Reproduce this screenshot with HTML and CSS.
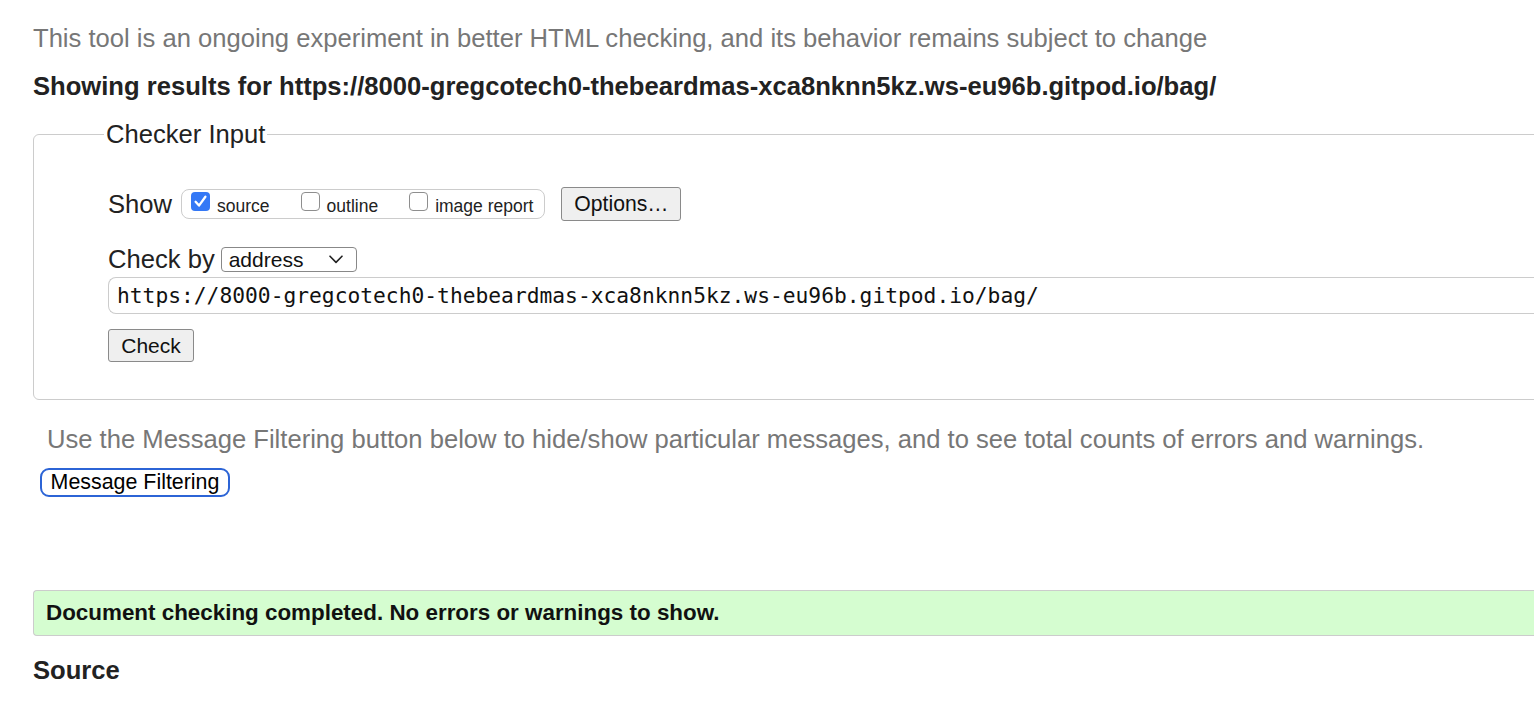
FILE: index.html
```html
<!DOCTYPE html>
<html lang="en">
<head>
<meta charset="utf-8">
<title>Nu Html Checker</title>
<link rel="stylesheet" href="styles.css">
</head>
<body>
<div class="page">
  <p class="intro">This tool is an ongoing experiment in better HTML checking, and its behavior remains subject to change</p>
  <p class="results-for">Showing results for https://8000-gregcotech0-thebeardmas-xca8nknn5kz.ws-eu96b.gitpod.io/bag/</p>
  <fieldset class="checker">
    <legend class="legend">Checker Input</legend>
    <div class="show-row">
      <span class="row-label">Show</span>
      <span class="show-group">
        <span class="opt">
          <span class="cb cb-on"><svg viewBox="0 0 19 19" width="19" height="19"><path d="M4.6 9.8 L8 13.6 L14.4 4.8" fill="none" stroke="#fff" stroke-width="2.3" stroke-linecap="round" stroke-linejoin="round"/></svg></span>
          <span class="opt-text">source</span>
        </span>
        <span class="opt">
          <span class="cb"></span>
          <span class="opt-text">outline</span>
        </span>
        <span class="opt">
          <span class="cb"></span>
          <span class="opt-text">image report</span>
        </span>
      </span>
      <button class="btn btn-options" type="button">Options…</button>
    </div>
    <div class="checkby-row">
      <span class="row-label">Check by</span>
      <span class="select">
        <span class="select-text">address</span>
        <svg class="chev" viewBox="0 0 14 9" width="14" height="9"><path d="M1 1.2 L7 7.4 L13 1.2" fill="none" stroke="#222" stroke-width="1.6" stroke-linecap="round" stroke-linejoin="round"/></svg>
      </span>
    </div>
    <div class="url-input">https://8000-gregcotech0-thebeardmas-xca8nknn5kz.ws-eu96b.gitpod.io/bag/</div>
    <div class="check-row"><button class="btn btn-check" type="button">Check</button></div>
  </fieldset>
  <p class="filter-note">Use the Message Filtering button below to hide/show particular messages, and to see total counts of errors and warnings.</p>
  <button class="btn-filter" type="button">Message Filtering</button>
  <div class="success">Document checking completed. No errors or warnings to show.</div>
  <h2 class="source-h">Source</h2>
</div>
</body>
</html>
```

FILE: styles.css
```css
html, body {
  margin: 0;
  padding: 0;
  overflow: hidden;
  background: #fff;
}
body {
  font-family: "Liberation Sans", Arial, sans-serif;
  color: #222;
}
.page {
  padding-left: 33px;
  margin-right: -200px;
}
.intro {
  margin: 24px 0 0;
  font-size: 25.6px;
  line-height: 28px;
  color: #777;
  white-space: nowrap;
}
.results-for {
  margin: 20px 0 0;
  font-size: 25.6px;
  line-height: 28px;
  font-weight: bold;
  color: #222;
  white-space: nowrap;
}
.checker {
  margin: 20px 0 0;
  padding: 0 0 37px 74px;
  border: 1px solid #ccc;
  border-radius: 6px;
  min-width: 0;
}
.legend {
  margin-left: -4px;
  padding: 0 2px;
  font-size: 25.6px;
  line-height: 28px;
  color: #222;
}
.show-row {
  display: flex;
  align-items: center;
  height: 34px;
  margin-top: 39px;
}
.row-label {
  font-size: 25.6px;
  line-height: 28px;
  color: #222;
}
.show-group {
  display: flex;
  align-items: center;
  height: 28px;
  margin-left: 9px;
  padding: 0 11px 0 9px;
  border: 1px solid #ccc;
  border-radius: 8px;
}
.opt {
  display: flex;
  align-items: center;
}
.opt + .opt {
  margin-left: 31px;
}
.cb {
  display: inline-block;
  width: 17px;
  height: 17px;
  border: 1px solid #8e8e8e;
  border-radius: 4px;
  background: #fff;
  box-sizing: content-box;
  position: relative;
  top: -3px;
}
.cb-on {
  width: 19px;
  height: 19px;
  border: none;
  background: #3478f6;
  top: -3px;
}
.cb-on svg {
  display: block;
}
.opt-text {
  margin-left: 7px;
  font-size: 17.5px;
  line-height: 20px;
  color: #222;
  position: relative;
  top: 2px;
}
.btn {
  font-family: "Liberation Sans", Arial, sans-serif;
  color: #111;
  background: #efefef;
  border: 1px solid #8a8a8a;
  border-radius: 3px;
  padding: 0;
}
.btn-options {
  margin-left: 16px;
  width: 120px;
  height: 34px;
  font-size: 21.2px;
}
.checkby-row {
  display: flex;
  align-items: center;
  height: 28px;
  margin-top: 24px;
}
.select {
  display: flex;
  align-items: center;
  justify-content: space-between;
  margin-left: 6px;
  width: 114px;
  height: 23px;
  padding: 0 13px 0 7px;
  border: 1px solid #888;
  border-radius: 4px;
}
.select-text {
  font-size: 21px;
  line-height: 23px;
  color: #111;
}
.chev {
  display: block;
}
.url-input {
  margin-top: 4px;
  height: 35px;
  line-height: 35px;
  padding-left: 8px;
  border: 1px solid #ccc;
  border-right: none;
  border-radius: 8px 0 0 8px;
  font-family: "DejaVu Sans Mono", "Liberation Mono", monospace;
  font-size: 21.27px;
  color: #111;
  white-space: nowrap;
}
.check-row {
  margin-top: 15px;
  display: flex;
}
.btn-check {
  width: 86px;
  height: 33px;
  font-size: 21px;
}
.filter-note {
  margin: 25px 0 0 14px;
  font-size: 25.6px;
  line-height: 28px;
  color: #777;
  white-space: nowrap;
}
.btn-filter {
  display: block;
  margin: 15px 0 0 7px;
  height: 29px;
  width: 190px;
  padding: 0;
  font-family: "Liberation Sans", Arial, sans-serif;
  font-size: 21.4px;
  color: #000;
  background: #fff;
  border: 2px solid #2c64d6;
  border-radius: 9px;
}
.success {
  margin-top: 93px;
  height: 44px;
  line-height: 44px;
  padding-left: 12px;
  background: #d5fdd0;
  border: 1px solid #ccc;
  border-right: none;
  border-radius: 4px 0 0 4px;
  font-size: 22.4px;
  font-weight: bold;
  color: #111;
  white-space: nowrap;
}
.source-h {
  margin: 20px 0 0;
  font-size: 25.6px;
  line-height: 28px;
  font-weight: bold;
  color: #222;
}
```
